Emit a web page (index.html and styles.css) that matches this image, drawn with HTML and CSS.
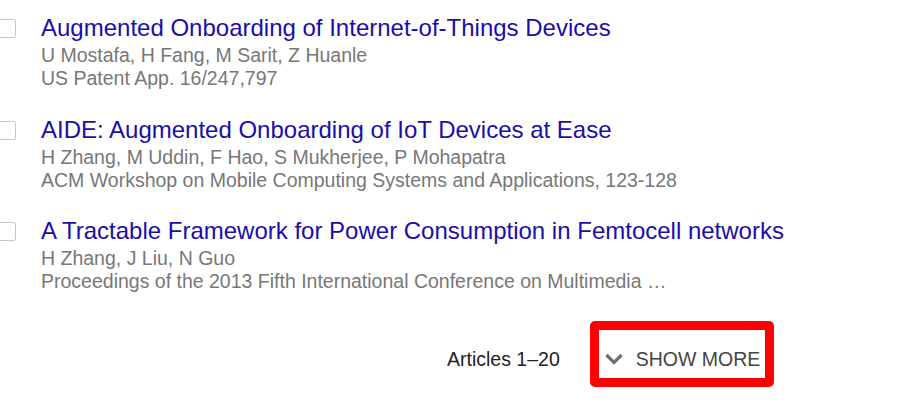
FILE: index.html
```html
<!DOCTYPE html>
<html>
<head>
<meta charset="utf-8">
<link rel="stylesheet" href="styles.css">
</head>
<body>
<div class="list">
  <div class="item">
    <span class="check"></span>
    <div class="body">
      <a class="title" href="#">Augmented Onboarding of Internet-of-Things Devices</a>
      <div class="meta">U Mostafa, H Fang, M Sarit, Z Huanle</div>
      <div class="meta">US Patent App. 16/247,797</div>
    </div>
  </div>
  <div class="item">
    <span class="check"></span>
    <div class="body">
      <a class="title" href="#">AIDE: Augmented Onboarding of IoT Devices at Ease</a>
      <div class="meta">H Zhang, M Uddin, F Hao, S Mukherjee, P Mohapatra</div>
      <div class="meta">ACM Workshop on Mobile Computing Systems and Applications, 123-128</div>
    </div>
  </div>
  <div class="item">
    <span class="check"></span>
    <div class="body">
      <a class="title" href="#">A Tractable Framework for Power Consumption in Femtocell networks</a>
      <div class="meta">H Zhang, J Liu, N Guo</div>
      <div class="meta">Proceedings of the 2013 Fifth International Conference on Multimedia …</div>
    </div>
  </div>
</div>
<div class="footer">
  <span class="count">Articles 1–20</span>
  <button class="more">
    <svg class="chev" width="20" height="12" viewBox="0 0 20 12"><path d="M2.5 2 L10 9.5 L17.5 2" fill="none" stroke="#707070" stroke-width="3.2"/></svg>
    <span>SHOW MORE</span>
  </button>
</div>
</body>
</html>
```
FILE: styles.css
```css
html, body { margin: 0; padding: 0; background: #fff; }
body { font-family: "Liberation Sans", Arial, sans-serif; width: 907px; height: 415px; overflow: hidden; }
.list { display: flex; flex-direction: column; padding-top: 14px; }
.item { display: flex; align-items: flex-start; height: 101.5px; }
.check { flex: none; width: 17px; height: 17px; border: 1px solid #c8c8c8; border-radius: 2px; margin-left: -3px; margin-top: 5px; }
.body { margin-left: 25px; display: flex; flex-direction: column; }
.title { color: #1a0dab; font-size: 24px; line-height: 28px; text-decoration: none; }
.meta { color: #777; font-size: 19.5px; line-height: 24px; }
.meta:nth-child(2) { margin-top: 1px; }
.meta:nth-child(3) { margin-top: -1px; }
.footer { display: flex; align-items: center; padding-left: 447px; margin-top: 2px; }
.count { color: #222; font-size: 19.5px; margin-top: 11px; }
.more { margin-left: 30px; display: flex; align-items: center; gap: 12px; border: 9px solid #f00; border-radius: 5px; background: #fff; width: 184px; height: 66px; padding: 11px 0 0 5px; font-family: inherit; color: #444; font-size: 19.5px; box-sizing: border-box; }
.chev { flex: none; }
```
